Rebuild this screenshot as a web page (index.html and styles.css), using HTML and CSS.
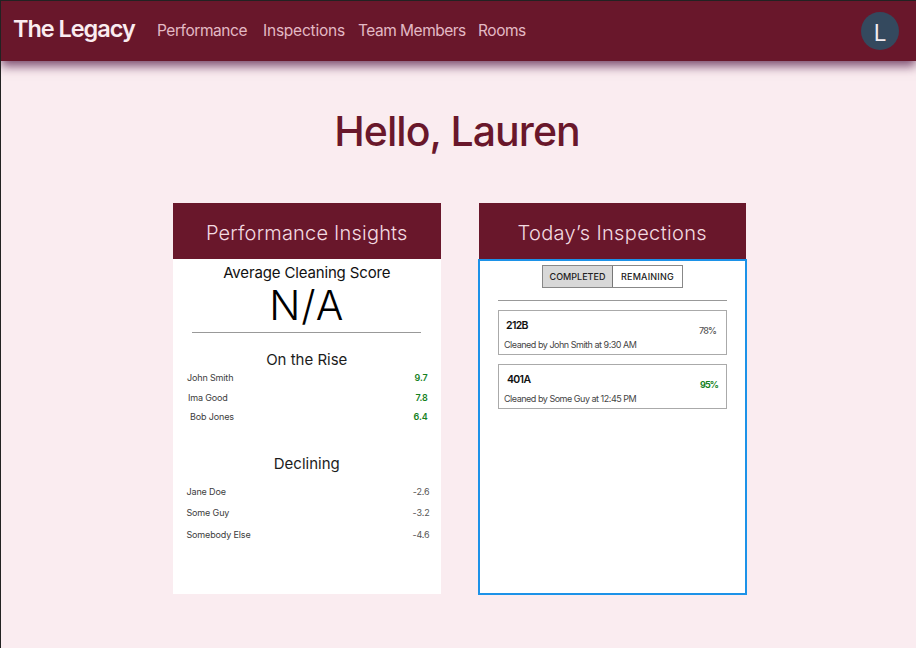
FILE: index.html
```html
<!DOCTYPE html>
<html lang="en">
<head>
<meta charset="utf-8">
<title>The Legacy</title>
<link rel="stylesheet" href="styles.css">
</head>
<body>
<header class="navbar">
  <div class="brand">The Legacy</div>
  <nav class="links">
    <a class="l-perf">Performance</a><a class="l-insp">Inspections</a><a class="l-team">Team Members</a><a class="l-rooms">Rooms</a>
  </nav>
  <div class="avatar">L</div>
</header>
<main>
  <h1>Hello, Lauren</h1>
  <div class="cards">
    <section class="card">
      <h2 class="insights">Performance Insights</h2>
      <div class="body">
        <div class="label">Average Cleaning Score</div>
        <div class="score">N/A</div>
        <hr>
        <h3 class="rise">On the Rise</h3>
        <ul class="list up">
          <li><span class="n1">John Smith</span><b>9.7</b></li>
          <li><span class="n2">Ima Good</span><b>7.8</b></li>
          <li><span class="n3">Bob Jones</span><b>6.4</b></li>
        </ul>
        <h3 class="declining">Declining</h3>
        <ul class="list down">
          <li><span>Jane Doe</span><b>-2.6</b></li>
          <li><span>Some Guy</span><b>-3.2</b></li>
          <li><span>Somebody Else</span><b>-4.6</b></li>
        </ul>
      </div>
    </section>
    <section class="card">
      <h2 class="today">Today’s Inspections</h2>
      <div class="body selected">
        <div class="tabs"><button class="active">COMPLETED</button><button class="remaining">REMAINING</button></div>
        <hr>
        <article class="room">
          <div><h4>212B</h4><p>Cleaned by John Smith at 9:30 AM</p></div>
          <span class="pct">78%</span>
        </article>
        <article class="room second">
          <div><h4>401A</h4><p>Cleaned by Some Guy at 12:45 PM</p></div>
          <span class="pct good">95%</span>
        </article>
      </div>
    </section>
  </div>
</main>
</body>
</html>
```
FILE: styles.css
```css
* { box-sizing: border-box; margin: 0; padding: 0; }
body {
  height: 648px;
  overflow: hidden;
  background: #faecf0;
  border-left: 1px solid #222;
  font-family: Inter, Roboto, sans-serif;
  color: #1c1c1c;
  white-space: nowrap;
}
.navbar {
  height: 61px;
  display: flex;
  align-items: flex-start;
  padding-left: 12px;
  background: #69172b;
  border-top: 1px solid #222;
  box-shadow: 0 5px 10px rgba(80, 20, 65, .75);
}
.brand { width: 144px; margin-top: 13px; font-size: 23.5px; font-weight: 600; letter-spacing: -1.05px; line-height: 30px; color: #faecf0; }
.links { display: flex; margin-top: 19px; font-size: 15.5px; letter-spacing: -.45px; line-height: 22px; color: #e3b9c4; }
.l-perf { width: 106px; }
.l-insp { width: 95px; letter-spacing: -.22px; }
.l-team { width: 120px; letter-spacing: -.5px; }
.avatar {
  width: 38px; height: 38px;
  margin: 11px 17px 0 auto;
  border-radius: 50%;
  background: #34495e;
  color: #f2ecf0;
  font-size: 22.5px;
  line-height: 42px;
  text-align: center;
}
h1 { margin-top: 45px; height: 50px; padding-right: 3px; font-size: 41px; line-height: 50px; font-weight: 550; letter-spacing: -.95px; text-align: center; color: #69172b; }
.cards { display: flex; gap: 38px; margin: 46.5px 0 0 172px; }
.card { width: 267.5px; height: 391px; display: flex; flex-direction: column; background: #fff; }
h2 { height: 56.5px; padding-top: 1px; background: #69172b; color: #f3dbe1; font-size: 20px; line-height: 58px; font-weight: 300; text-align: center; letter-spacing: .2px; }
.today { letter-spacing: .35px; }
.body { flex: 1; }
.label { margin-top: 4px; font-size: 15px; line-height: 20px; letter-spacing: -.15px; text-align: center; color: #111; }
.score { font-size: 41px; letter-spacing: 1px; line-height: 45px; font-weight: 300; text-align: center; color: #000; }
hr { width: 229px; margin: 4px auto 0; border: 0; border-top: 1px solid #999; }
h3 { font-size: 15px; line-height: 20px; font-weight: 400; text-align: center; }
.rise { margin-top: 17px; }
.declining { margin-top: 25px; }
.list { list-style: none; font-size: 9px; letter-spacing: -.15px; color: #3c3c3c; }
.list li { display: flex; justify-content: space-between; }
.up li { height: 19.5px; line-height: 16px; padding: 0 13px 0 14px; }
.up b { color: #16821f; font-weight: 600; }
.n2 { margin-left: 1px; }
.n3 { margin-left: 3px; }
.down { margin-top: 8px; }
.down li { height: 21.7px; line-height: 20px; padding: 0 11px 0 13.5px; }
.down b { font-weight: 400; color: #555; }
.selected { margin: 0 -1px -1px -.5px; border: 2px solid #1c92e8; }
.tabs { display: flex; width: 141px; height: 23px; margin: 4px auto 0; border: 1px solid #888; }
.tabs button { flex: 1; border: 0; background: #fff; font: 500 9px/22px Inter, sans-serif; color: #222; }
.tabs .active { background: #d8d8d8; border-right: 1px solid #777; }
.tabs .remaining { letter-spacing: .2px; }
.selected hr { margin-top: 12px; }
.room { width: 229px; height: 45px; margin: 9px auto 0; border: 1px solid #aaa; display: flex; justify-content: space-between; padding: 6.5px 10px 0 5px; }
.room h4 { margin-left: 2px; font-size: 10.5px; line-height: 15px; font-weight: 600; letter-spacing: -.65px; color: #111; }
.room p { margin-top: 4px; font-size: 9px; line-height: 15px; letter-spacing: -.48px; color: #444; }
.second h4 { margin-left: 3px; }
.second { padding-right: 8px; }
.pct { margin-top: 5.5px; font-size: 9px; line-height: 15px; font-weight: 500; letter-spacing: -.9px; color: #555; }
.good { font-weight: 700; color: #16821f; }
```
